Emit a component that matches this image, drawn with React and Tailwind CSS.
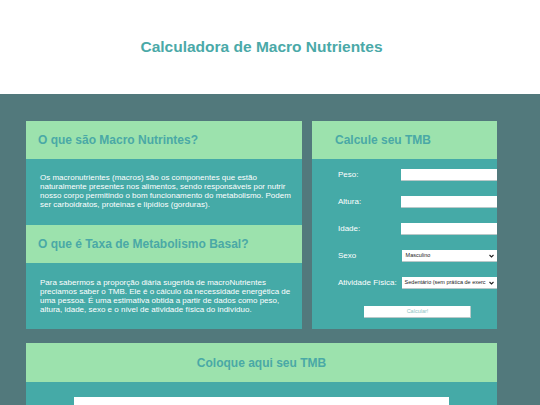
// App.jsx
// Calculadora de Macro Nutrientes — two info cards, TMB form and result panel

const font = { fontFamily: '"Liberation Sans", Arial, sans-serif' };

function InfoBlock({ title, children, bodyPad }) {
  return (
    <>
      <div className="h-[38px] flex items-center px-[12px] bg-[#9ce2ad]">
        <h2 className="text-[12px] font-bold text-[#4aa9a6] leading-none">{title}</h2>
      </div>
      <div className={`h-[66px] pl-[14px] pr-[4px] bg-[#45aaa7] ${bodyPad}`}>
        <p className="text-[8px] leading-[9.1px] text-white">{children}</p>
      </div>
    </>
  );
}

function Field({ label, children }) {
  return (
    <div className="flex items-center h-[12px] mb-[15px]">
      <span className="w-[64px] text-[8px] text-white leading-none">{label}</span>
      {children}
    </div>
  );
}

function Chevron() {
  return (
    <svg viewBox="0 0 10 6" className="absolute right-[3px] top-[4px] w-[5px] h-[4px]">
      <path d="M1 1 L5 5 L9 1" fill="none" stroke="#222" strokeWidth="2.2" />
    </svg>
  );
}

export default function App() {
  return (
    <div className="w-[540px] h-[405px] overflow-hidden bg-[#52797c]" style={font}>
      {/* Header */}
      <header className="h-[94px] bg-white">
        <div className="ml-[26px] w-[471px] h-full flex items-center justify-center">
          <h1 className="text-[15.5px] font-bold text-[#4aa9a8] leading-none">
            Calculadora de Macro Nutrientes
          </h1>
        </div>
      </header>

      <main className="ml-[26px] w-[471px] pt-[27px]">
        <div className="flex gap-[10px]">
          {/* Left info card */}
          <section className="w-[276px] flex flex-col">
            <InfoBlock title="O que são Macro Nutrintes?" bodyPad="pt-[14px]">
              Os macronutrientes (macros) são os componentes que estão naturalmente presentes nos
              alimentos, sendo responsáveis por nutrir nosso corpo permitindo o bom funcionamento do
              metabolismo. Podem ser carboidratos, proteinas e lipídios (gorduras).
            </InfoBlock>
            <InfoBlock title="O que é Taxa de Metabolismo Basal?" bodyPad="pt-[15px]">
              Para sabermos a proporção diária sugerida de macroNutrientes preciamos saber o TMB. Ele
              é o cálculo da necessidade energética de uma pessoa. É uma estimativa obtida a partir de
              dados como peso, altura, idade, sexo e o nível de atividade física do indivíduo.
            </InfoBlock>
          </section>

          {/* Right form card */}
          <section className="w-[185px] flex flex-col">
            <div className="h-[38px] flex items-center px-[23px] bg-[#9ce2ad]">
              <h2 className="text-[12px] font-bold text-[#4aa9a6] leading-none">Calcule seu TMB</h2>
            </div>
            <div className="h-[170px] bg-[#45aaa7] pt-[10px] pl-[26px]">
              <Field label="Peso:">
                <input className="w-[96px] h-[12px] bg-white shadow-[inset_0_-1px_0_#b9c9c9]" />
              </Field>
              <Field label="Altura:">
                <input className="w-[96px] h-[12px] bg-white shadow-[inset_0_-1px_0_#b9c9c9]" />
              </Field>
              <Field label="Idade:">
                <input className="w-[96px] h-[12px] bg-white shadow-[inset_0_-1px_0_#b9c9c9]" />
              </Field>
              <Field label="Sexo">
                <div className="relative w-[96px] h-[12px] bg-white shadow-[inset_0_-1px_0_#b9c9c9]">
                  <span className="absolute left-[4px] top-[3px] text-[5.5px] leading-none text-[#222]">
                    Masculino
                  </span>
                  <Chevron />
                </div>
              </Field>
              <Field label="Atividade Física:">
                <div className="relative w-[96px] h-[12px] bg-white shadow-[inset_0_-1px_0_#b9c9c9]">
                  <span className="absolute left-[3px] top-[3px] text-[5.5px] leading-none text-[#222] whitespace-nowrap">
                    Sedentário (sem prática de exerc
                  </span>
                  <Chevron />
                </div>
              </Field>
              <div className="flex pl-[26px] pt-[2px]">
                <button className="w-[107px] h-[12px] flex items-center justify-center bg-white text-[5.5px] text-[#8fc4c4] leading-none shadow-[inset_-1px_-1px_0_#b9c9c9]">
                  Calcular!
                </button>
              </div>
            </div>
          </section>
        </div>

        {/* Result card */}
        <section className="mt-[14px]">
          <div className="h-[39px] flex items-center justify-center bg-[#9ce2ad]">
            <h2 className="text-[12px] font-bold text-[#4aa9a6] leading-none">Coloque aqui seu TMB</h2>
          </div>
          <div className="h-[60px] bg-[#45aaa7] pt-[15px] pl-[48px]">
            <div className="w-[375px] h-[30px] bg-white" />
          </div>
        </section>
      </main>
    </div>
  );
}
